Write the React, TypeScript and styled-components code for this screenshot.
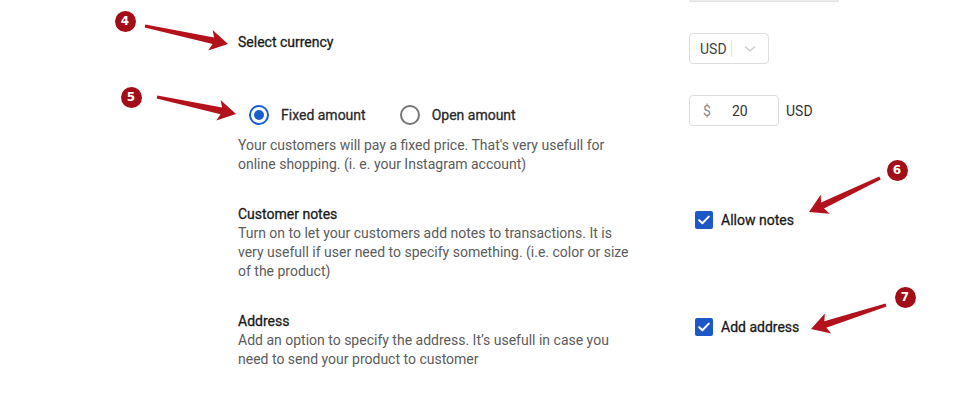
import React from "react";
import styled, { createGlobalStyle } from "styled-components";

const GlobalStyle = createGlobalStyle`
  html, body { margin: 0; padding: 0; background: #ffffff; }
  * { box-sizing: border-box; }
`;

const Page = styled.div`
  position: relative;
  width: 960px;
  height: 401px;
  overflow: hidden;
  background: #ffffff;
  font-family: Roboto, "Liberation Sans", Arial, sans-serif;
  color: #222;
`;

const Form = styled.div`
  display: grid;
  grid-template-columns: 451px 1fr;
  row-gap: 31px;
  padding-left: 238px;
  align-items: start;
`;

const Cell = styled.div`
  display: flex;
  flex-direction: column;
  align-items: flex-start;
`;

const CutField = styled.div`
  width: 150px;
  height: 2px;
  background: #ececec;
  border: 1px solid #e2e2e2;
  border-top: none;
  border-radius: 0 0 4px 4px;
`;

const Title = styled.div`
  font-size: 14px;
  font-weight: 400;
  -webkit-text-stroke: 0.3px #1a1a1a;
  line-height: 19px;
  color: #1a1a1a;
`;

const Desc = styled.p<{ $gap?: number }>`
  margin: ${(p) => p.$gap ?? 0}px 0 0 0;
  width: 400px;
  font-size: 14px;
  line-height: 19px;
  color: #5c5c5c;
`;

const SelectBox = styled.div`
  display: flex;
  align-items: center;
  width: 80px;
  height: 31px;
  padding-left: 10px;
  border: 1px solid #dddddd;
  border-radius: 4px;
  font-size: 14px;
  color: #444;
`;

const Divider = styled.span`
  width: 1px;
  height: 16px;
  margin-left: 4px;
  background: #e4e4e4;
`;

const Chevron = styled.svg`
  margin-left: 12px;
`;

const AmountRow = styled.div`
  display: flex;
  align-items: center;
  gap: 7px;
  font-size: 14px;
  color: #333;
`;

const AmountBox = styled.div`
  display: flex;
  align-items: center;
  width: 90px;
  height: 31px;
  padding-left: 13px;
  border: 1px solid #dddddd;
  border-radius: 4px;
`;

const Currency = styled.span`
  color: #8a8a8a;
  width: 8px;
`;

const Amount = styled.span`
  margin-left: 21px;
  color: #333;
`;

const RadioGroup = styled.div`
  display: flex;
  gap: 23px;
  padding-top: 10px;
`;

const RadioOption = styled.label`
  display: flex;
  align-items: center;
  gap: 12px;
  padding-left: 11px;
  font-size: 14px;
  font-weight: 400;
  -webkit-text-stroke: 0.3px #2a2a2a;
  line-height: 20px;
  color: #2a2a2a;
`;

const RadioCircle = styled.span<{ $checked?: boolean }>`
  position: relative;
  width: 20px;
  height: 20px;
  border-radius: 50%;
  border: 2px solid ${(p) => (p.$checked ? "#1a5fd1" : "#767676")};
  &::after {
    content: "";
    position: absolute;
    left: 3px;
    top: 3px;
    width: 10px;
    height: 10px;
    border-radius: 50%;
    background: ${(p) => (p.$checked ? "#1a5fd1" : "transparent")};
  }
`;

const CheckRow = styled.label`
  display: flex;
  align-items: center;
  gap: 8px;
  margin-top: 6px;
  margin-left: 6px;
  font-size: 14px;
  font-weight: 400;
  -webkit-text-stroke: 0.3px #1a1a1a;
  color: #1a1a1a;
`;

const CheckBox = styled.span`
  display: flex;
  align-items: center;
  justify-content: center;
  width: 18px;
  height: 18px;
  border-radius: 2px;
  background: #1c58c6;
`;

const Overlay = styled.svg`
  position: absolute;
  left: 0;
  top: 0;
  pointer-events: none;
`;

const Badge = styled.div<{ $x: number; $y: number }>`
  position: absolute;
  left: ${(p) => p.$x - 10.5}px;
  top: ${(p) => p.$y - 10.5}px;
  width: 21px;
  height: 21px;
  border-radius: 50%;
  background: #a30d18;
  color: #ffffff;
  font-family: "DejaVu Sans", Roboto, sans-serif;
  font-size: 12px;
  font-weight: 700;
  line-height: 21px;
  text-align: center;
`;

type Pt = [number, number];

function arrowPoints(tail: Pt, tip: Pt): string {
  const dx = tip[0] - tail[0];
  const dy = tip[1] - tail[1];
  const len = Math.hypot(dx, dy);
  const ux = dx / len;
  const uy = dy / len;
  const nx = -uy;
  const ny = ux;
  const headLen = 15;
  const headW = 10.5;
  const t0 = 1.6;
  const t1 = 3.4;
  const bx = tip[0] - ux * headLen;
  const by = tip[1] - uy * headLen;
  const sweep = 3;
  const pts: Pt[] = [
    [tail[0] + nx * t0, tail[1] + ny * t0],
    [bx + nx * t1, by + ny * t1],
    [bx - ux * sweep + nx * headW, by - uy * sweep + ny * headW],
    tip,
    [bx - ux * sweep - nx * headW, by - uy * sweep - ny * headW],
    [bx - nx * t1, by - ny * t1],
    [tail[0] - nx * t0, tail[1] - ny * t0],
  ];
  return pts.map((p) => `${p[0].toFixed(1)},${p[1].toFixed(1)}`).join(" ");
}

const arrows: { tail: Pt; tip: Pt }[] = [
  { tail: [145, 26], tip: [228, 44] },
  { tail: [157, 97], tip: [236, 114] },
  { tail: [880, 178], tip: [809, 212] },
  { tail: [886, 305], tip: [811, 329] },
];

const badges = [
  { n: "4", x: 125, y: 21 },
  { n: "5", x: 131, y: 97 },
  { n: "6", x: 897, y: 170 },
  { n: "7", x: 905, y: 297 },
];

const Check = () => (
  <svg width="12" height="10" viewBox="0 0 12 10">
    <path d="M1.2 5.2 L4.4 8.2 L10.8 1.6" fill="none" stroke="#fff" strokeWidth="2" strokeLinecap="round" strokeLinejoin="round" />
  </svg>
);

export default function App() {
  return (
    <Page>
      <GlobalStyle />
      <Form>
        <Cell />
        <Cell>
          <CutField />
        </Cell>

        <Cell>
          <Title>Select currency</Title>
        </Cell>
        <Cell>
          <SelectBox>
            USD
            <Divider />
            <Chevron width="12" height="8" viewBox="0 0 12 8">
              <path d="M1 1.5 L6 6 L11 1.5" fill="none" stroke="#cfcfcf" strokeWidth="1.6" />
            </Chevron>
          </SelectBox>
        </Cell>

        <Cell>
          <RadioGroup>
            <RadioOption>
              <RadioCircle $checked />
              Fixed amount
            </RadioOption>
            <RadioOption>
              <RadioCircle />
              Open amount
            </RadioOption>
          </RadioGroup>
          <Desc $gap={11}>
            Your customers will pay a fixed price. That's very usefull for online shopping. (i. e. your Instagram account)
          </Desc>
        </Cell>
        <Cell>
          <AmountRow>
            <AmountBox>
              <Currency>$</Currency>
              <Amount>20</Amount>
            </AmountBox>
            USD
          </AmountRow>
        </Cell>

        <Cell>
          <Title>Customer notes</Title>
          <Desc>
            Turn on to let your customers add notes to transactions. It is very usefull if user need to specify something. (i.e. color or size of the product)
          </Desc>
        </Cell>
        <Cell>
          <CheckRow>
            <CheckBox>
              <Check />
            </CheckBox>
            Allow notes
          </CheckRow>
        </Cell>

        <Cell>
          <Title>Address</Title>
          <Desc>
            Add an option to specify the address. It’s usefull in case you need to send your product to customer
          </Desc>
        </Cell>
        <Cell>
          <CheckRow>
            <CheckBox>
              <Check />
            </CheckBox>
            Add address
          </CheckRow>
        </Cell>
      </Form>

      <Overlay width="960" height="401" viewBox="0 0 960 401">
        {arrows.map((a, i) => (
          <polygon key={i} points={arrowPoints(a.tail, a.tip)} fill="#b3111c" />
        ))}
      </Overlay>
      {badges.map((b) => (
        <Badge key={b.n} $x={b.x} $y={b.y}>
          {b.n}
        </Badge>
      ))}
    </Page>
  );
}
